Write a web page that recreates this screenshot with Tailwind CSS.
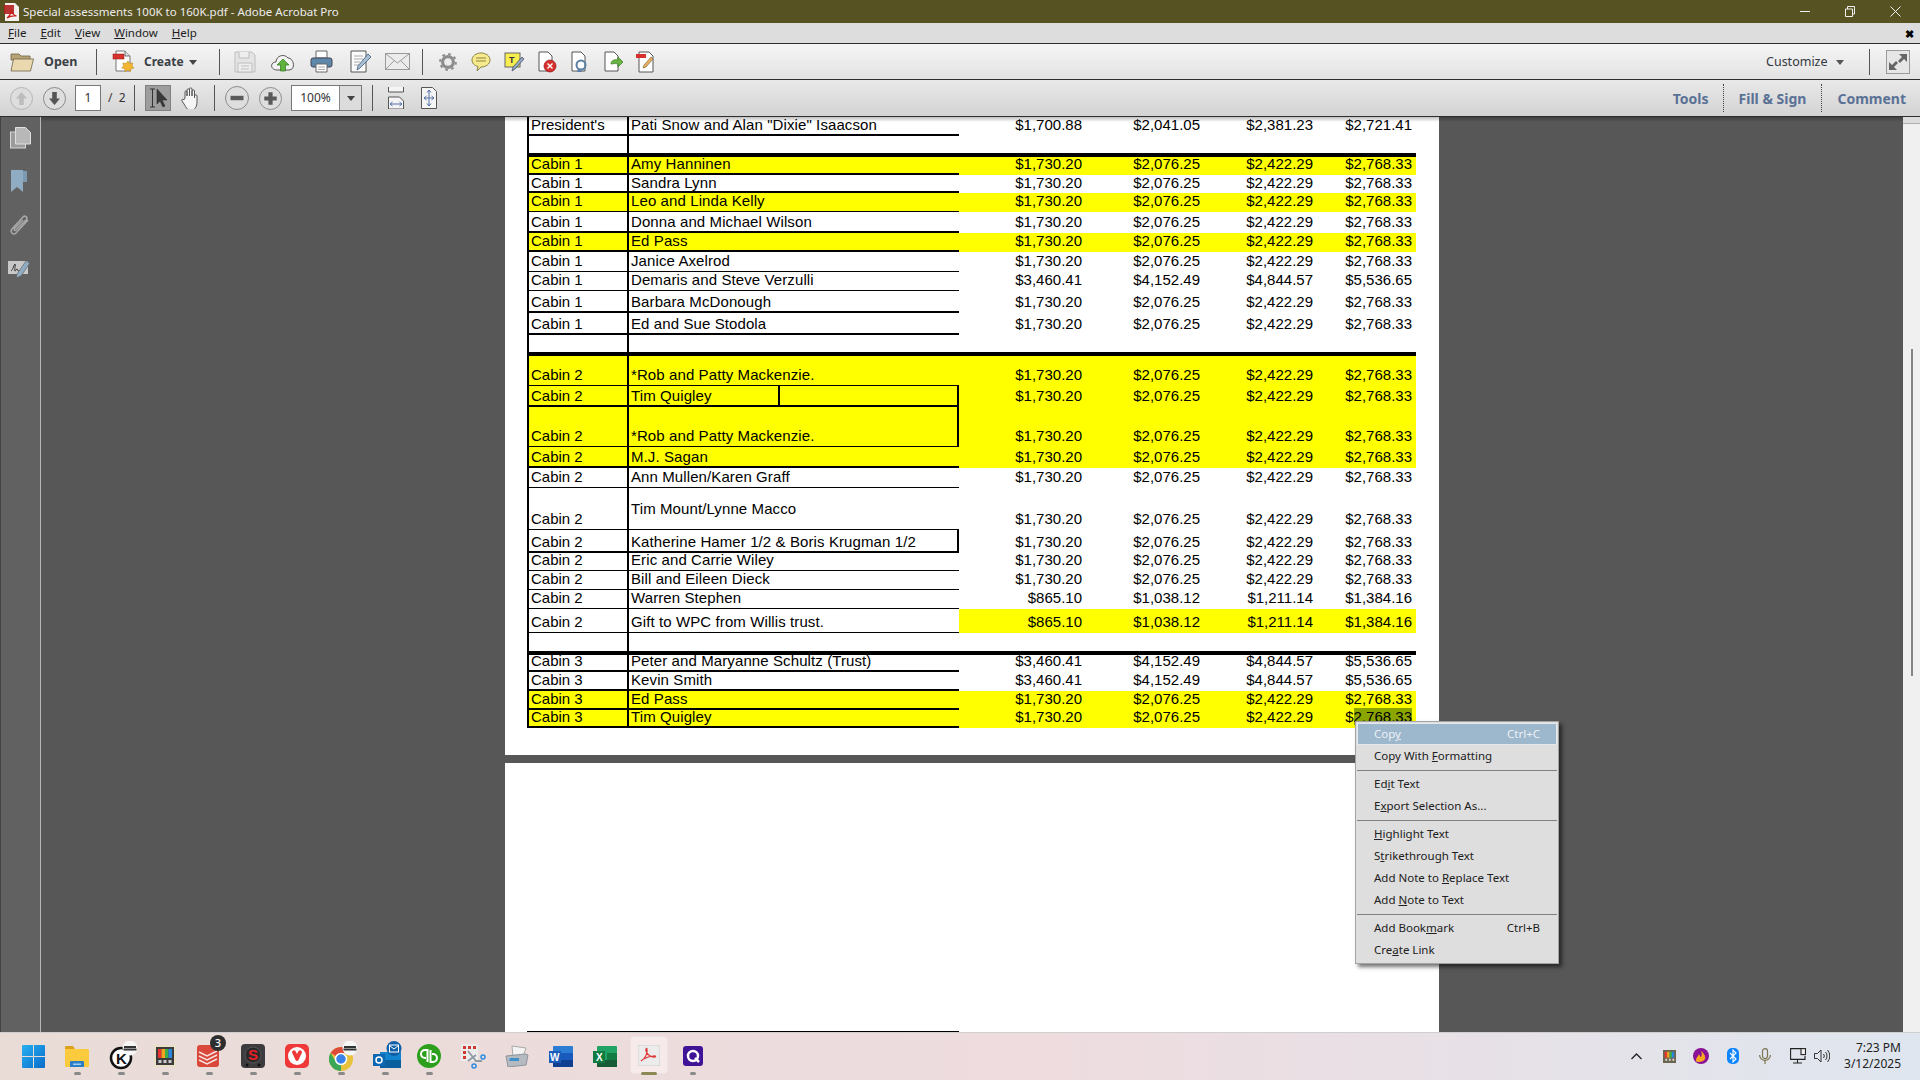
<!DOCTYPE html>
<html lang="en">
<head>
<meta charset="utf-8">
<title>Special assessments 100K to 160K.pdf - Adobe Acrobat Pro</title>
<script src="https://cdn.jsdelivr.net/npm/@tailwindcss/browser@4"></script>
</head>
<body class="w-[1920px] h-[1080px] overflow-hidden flex flex-col font-['Noto_Sans',sans-serif] bg-[#575757] relative">

<!-- Title bar -->
<header class="h-[23px] shrink-0 bg-[#575222] flex items-center text-[#ececec] text-[11.500px] relative z-20">
  <svg class="ml-[4px] w-[15px] h-[18px]" viewBox="0 0 15 18"><path d="M1 0h10l4 4v14H1z" fill="#f4f0ee"/><path d="M0 2h10v9H0z" fill="#b3201c" opacity=".9"/><path d="M3 15c3-2 4-6 3.500-9 .5 3 3 6 6 7-3-.5-6 0-9.500 2z" fill="none" stroke="#c8201c" stroke-width="1.200"/></svg>
  <span class="ml-[4px]">Special assessments 100K to 160K.pdf - Adobe Acrobat Pro</span>
  <div class="ml-auto flex items-center mr-[19px] gap-[34px]">
    <svg class="w-[11px] h-[11px]" viewBox="0 0 11 11"><path d="M0 5.500h10" stroke="#f0f0f0"/></svg>
    <svg class="w-[11px] h-[11px] -ml-[1px] mr-[1px]" viewBox="0 0 11 11" fill="none" stroke="#f0f0f0"><path d="M1.500 3h7v7.500h-7zM3.500 3V.5h7v7.500h-2"/></svg>
    <svg class="w-[11px] h-[11px]" viewBox="0 0 11 11" fill="none" stroke="#f0f0f0"><path d="M.5.5l10 10M10.500.5l-10 10"/></svg>
  </div>
</header>

<!-- Menu bar -->
<nav class="h-[20px] shrink-0 bg-[#dddddd] flex items-center text-[11.500px] text-[#1c1c1c] pl-[8px] gap-[14px] relative z-20">
  <span><span class="underline">F</span>ile</span>
  <span><span class="underline">E</span>dit</span>
  <span><span class="underline">V</span>iew</span>
  <span><span class="underline">W</span>indow</span>
  <span><span class="underline">H</span>elp</span>
  <span class="ml-auto mr-[6px] text-[11px] font-bold leading-none text-black">✖</span>
</nav>

<!-- Main toolbar -->
<div class="h-[37px] shrink-0 flex items-center border-y border-y-[#2e2e2e] bg-linear-to-b from-[#f5f5f5] to-[#e3e3e3] pl-[10px] pr-[10px] relative z-20">
  <svg class="w-[24px] h-[20px]" viewBox="0 0 24 20"><path d="M1 2h8l2 2h9v4H1z" fill="#b9a477" stroke="#6f6247" stroke-width=".8"/><path d="M1 19 3.500 7H23.500l-3 12z" fill="#ead9ae" stroke="#6f6247" stroke-width=".8"/></svg>
  <span class="ml-[10px] mt-[1px] w-[33px] text-[12.500px] font-bold text-[#3a3f46]">Open</span>
  <div class="ml-[19px] w-px h-[26px] bg-[#555]"></div>
  <svg class="ml-[15px] w-[24px] h-[23px]" viewBox="0 0 24 23"><path d="M4 1h9l5 5v15H4z" fill="#fdfdfd" stroke="#555" stroke-width=".8"/><path d="M13 1v5h5" fill="#ddd" stroke="#555" stroke-width=".8"/><rect x="1" y="4" width="11" height="5" fill="#d9332e" stroke="#8a1512" stroke-width=".5"/><path d="M16 11l1.800 2.500 3-.6-.8 3 2 2-3 .8-.7 3-2.500-1.800-2.500 1.800-.7-3-3-.8 2-2-.8-3 3 .6z" fill="#f2b632" stroke="#b57f16" stroke-width=".5"/></svg>
  <span class="ml-[8px] mt-[1px] w-[39px] text-[12px] font-bold text-[#3a3f46]">Create</span>
  <svg class="ml-[6px] w-[8px] h-[5px] mt-[1px]" viewBox="0 0 8 5"><path d="M0 0h8L4 5z" fill="#444"/></svg>
  <div class="ml-[22px] w-px h-[26px] bg-[#555]"></div>
  <svg class="ml-[14px] w-[22px] h-[22px]" viewBox="0 0 22 22" fill="none" stroke="#bdbdbd"><path d="M1 1h17l3 3v17H1z" fill="#e4e4e4"/><path d="M5 1v6h10V1M4 12h14v9H4z" fill="#eee"/><path d="M7 15h8M7 18h8"/></svg>
  <svg class="ml-[15px] w-[24px] h-[20px]" viewBox="0 0 24 20"><path d="M6 18c-7 0-7-8-1-8 0-6 8-9 12-4 6 0 8 12 1 12z" fill="#f3f3f3" stroke="#555"/><path d="M12 7l6 6h-3.500v6h-5v-6H6z" fill="#5fb23c" stroke="#2f7a1a" stroke-width=".7"/></svg>
  <svg class="ml-[15px] w-[23px] h-[23px]" viewBox="0 0 23 23"><path d="M6 1h11v7H6z" fill="#fff" stroke="#666"/><rect x="1" y="8" width="21" height="9" rx="2" fill="#5d87ab" stroke="#445"/><path d="M6 14h11v8H6z" fill="#fff" stroke="#666"/><path d="M8 17h7M8 19.500h7" stroke="#aaa"/></svg>
  <svg class="ml-[17px] w-[22px] h-[23px]" viewBox="0 0 22 23"><path d="M1 1h15v21H1z" fill="#fbfbfb" stroke="#555"/><path d="M4 6h9M4 9h9M4 12h6M4 15h5" stroke="#aaa"/><path d="M7 20l1-4L18 4l3 3L10 18z" fill="#a9bfd4" stroke="#3d5a78" stroke-width=".8"/></svg>
  <svg class="ml-[13px] w-[25px] h-[17px]" viewBox="0 0 25 17" fill="#ececec" stroke="#999"><rect x=".5" y=".5" width="24" height="16"/><path d="M.5.5 12.500 10 24.500.5M.5 16.500 9 7.800M24.500 16.500 16 7.800" fill="none"/></svg>
  <div class="ml-[12px] w-px h-[26px] bg-[#555]"></div>
  <svg class="ml-[16px] w-[18px] h-[20px]" viewBox="0 0 20 20"><circle cx="10" cy="10" r="6" fill="none" stroke="#8d8d8d" stroke-width="3.500"/><circle cx="10" cy="10" r="8.800" fill="none" stroke="#8d8d8d" stroke-width="2.200" stroke-dasharray="3 3.910"/></svg>
  <svg class="ml-[14px] w-[20px] h-[20px]" viewBox="0 0 20 20"><path d="M10 1c5 0 9 3 9 7s-4 7-9 7l-4 4 1-4.500C3 13.500 1 11 1 8c0-4 4-7 9-7z" fill="#f7ea8c" stroke="#8b8248"/><path d="M5 6h10M5 9h10" stroke="#8b8248"/></svg>
  <svg class="ml-[13px] w-[20px] h-[20px]" viewBox="0 0 20 20"><rect x="1" y="1" width="15" height="14" fill="#f8ee50" stroke="#666"/><text x="5" y="11" font-size="9" font-weight="700" font-family="Liberation Sans" fill="#333">T</text><path d="M8 19l1-4 9-10 2 2-9 10z" fill="#8fa9c4" stroke="#445" stroke-width=".7"/></svg>
  <svg class="ml-[14px] w-[19px] h-[22px]" viewBox="0 0 19 22"><path d="M1 1h9l4 4v15H1z" fill="#fff" stroke="#555"/><circle cx="12" cy="15" r="6" fill="#d8302c" stroke="#8f1512" stroke-width=".7"/><path d="M9.500 12.500l5 5m0-5l-5 5" stroke="#fff" stroke-width="1.400"/></svg>
  <svg class="ml-[14px] w-[17px] h-[22px]" viewBox="0 0 17 22"><path d="M1 1h9l4 4v15H1z" fill="#fff" stroke="#555"/><circle cx="10" cy="14" r="4.500" fill="none" stroke="#5b7fa3" stroke-width="2"/><path d="M7 18l-1 3h6z" fill="#5b7fa3"/></svg>
  <svg class="ml-[16px] w-[20px] h-[22px]" viewBox="0 0 20 22"><path d="M1 1h9l4 4v15H1z" fill="#fff" stroke="#555"/><path d="M7 13c0-4 4-5 7-4V6l5 5-5 5v-3c-3-1-5 0-7 0z" fill="#6ab345" stroke="#3a7c1f" stroke-width=".7"/></svg>
  <svg class="ml-[12px] w-[20px] h-[22px]" viewBox="0 0 20 22"><path d="M3 1h10l4 4v16H3z" fill="#fff" stroke="#555"/><rect x="0" y="3" width="10" height="4" fill="#d8302c"/><path d="M7 17l1-3 7-8 2 2-7 8z" fill="#e5b065" stroke="#7a5a25" stroke-width=".6"/></svg>

  <span class="ml-auto mt-[1px] w-[60px] text-[12.500px] text-[#33383f]">Customize</span>
  <svg class="ml-[10px] mt-[1px] w-[8px] h-[5px]" viewBox="0 0 8 5"><path d="M0 0h8L4 5z" fill="#555"/></svg>
  <div class="ml-[25px] w-px h-[26px] bg-[#555]"></div>
  <svg class="ml-[16px] w-[24px] h-[24px]" viewBox="0 0 24 24"><rect x=".5" y=".5" width="23" height="23" fill="#e6e6e6" stroke="#9a9a9a"/><path d="M13 4h8v8l-3-3-4 4-2-2 4-4zM11 20H3v-8l3 3 4-4 2 2-4 4z" fill="#666"/></svg>
</div>

<!-- Navigation toolbar -->
<div class="h-[37px] shrink-0 flex items-center border-b border-b-[#2e2e2e] bg-linear-to-b from-[#e9e9e9] to-[#d3d3d3] pl-[10px] relative z-20">
  <svg class="w-[23px] h-[23px]" viewBox="0 0 23 23"><circle cx="11.500" cy="11.500" r="11" fill="#dedede" stroke="#b5b5b5"/><path d="M11.500 5l5.500 6.500h-3.200V18H9.200v-6.500H6z" fill="#bdbdbd"/></svg>
  <svg class="ml-[10px] w-[23px] h-[23px]" viewBox="0 0 23 23"><circle cx="11.500" cy="11.500" r="11" fill="#dedede" stroke="#8a8a8a"/><path d="M11.500 18 6 11.500h3.200V5h4.600v6.500H17z" fill="#555"/></svg>
  <div class="ml-[9px] w-[26px] h-[26px] bg-white border border-[#777] flex items-center justify-center text-[12px] text-[#333]">1</div>
  <span class="ml-[7px] w-[17px] text-[12px] text-[#333] whitespace-nowrap">/&nbsp;&nbsp;2</span>
  <div class="ml-[9px] w-px h-[26px] bg-[#555]"></div>
  <div class="ml-[10px] w-[26px] h-[26px] bg-[#9d9d9d] border border-[#808080] flex items-center justify-center">
    <svg class="w-[21px] h-[20px]" viewBox="0 0 21 20"><path d="M2 1h5M2 19h5M4.500 1v18" stroke="#333" fill="none"/><path d="M9 1l10 11h-5l3 6-2 1-3-6-3 3z" fill="#3a3a3a" stroke="#222" stroke-width=".5"/></svg>
  </div>
  <svg class="ml-[10px] w-[19px] h-[22px]" viewBox="0 0 19 22"><path d="M4 11V5c0-1.500 2-1.500 2 0v4-6c0-1.500 2.500-1.500 2.500 0v6V2c0-1.500 2.500-1.500 2.500 0v7-5c0-1.500 2.500-1.500 2.500 0v7-2c0-1.500 2.500-1.500 2.500 0v6c0 4-2 8-5 8H9c-3 0-4-3-6-6l-2-3c-.8-1.500 1-2.500 2-1.200z" fill="#f5f5f5" stroke="#555"/></svg>
  <div class="ml-[14px] w-px h-[26px] bg-[#555]"></div>
  <svg class="ml-[10px] w-[24px] h-[24px]" viewBox="0 0 24 24"><circle cx="12" cy="12" r="11.500" fill="#dedede" stroke="#8a8a8a"/><rect x="5.500" y="9.800" width="13" height="4.400" fill="#5a5a5a"/></svg>
  <svg class="ml-[10px] w-[23px] h-[23px]" viewBox="0 0 24 24"><circle cx="12" cy="12" r="11.500" fill="#dedede" stroke="#8a8a8a"/><path d="M9.800 5.500h4.400v4.300h4.300v4.400h-4.300v4.300H9.800v-4.300H5.500V9.800h4.300z" fill="#5a5a5a"/></svg>
  <div class="ml-[9px] w-[71px] h-[26px] bg-white border border-[#777] flex items-center text-[12px] text-[#333]">
    <span class="w-[47px] text-center">100%</span>
    <span class="flex-1 h-full bg-[#dcdcdc] border-l border-l-[#888] flex items-center justify-center"><svg class="w-[8px] h-[5px]" viewBox="0 0 8 5"><path d="M0 0h8L4 5z" fill="#444"/></svg></span>
  </div>
  <div class="ml-[10px] w-px h-[26px] bg-[#555]"></div>
  <svg class="ml-[15px] w-[16px] h-[22px]" viewBox="0 0 16 22" fill="none"><path d="M.5 0v5h15V0" stroke="#555" fill="#f5f5f5"/><path d="M.5 10h11l4 4v8H.5z" stroke="#555" fill="#f5f5f5"/><path d="M2 17h12M2 17l2.500-2M2 17l2.500 2M14 17l-2.500-2M14 17l-2.500 2" stroke="#5470a8"/></svg>
  <svg class="ml-[17px] w-[16px] h-[22px]" viewBox="0 0 16 22" fill="none"><path d="M.5.500h11l4 4V21.500H.5z" stroke="#555" fill="#f5f5f5"/><path d="M8 3v16M3 11h10M8 3 6 5.500M8 3l2 2.500M8 19l-2-2.500M8 19l2-2.500M3 11l2.500-2M3 11l2.500 2M13 11l-2.500-2M13 11l-2.500 2" stroke="#5470a8"/></svg>

  <div class="ml-auto flex items-center text-[14px] font-bold text-[#5a7196] h-[28px] pr-[14px]">
    <span class="pr-[14px]">Tools</span>
    <span class="px-[15px] h-full flex items-center border-l border-dotted border-l-[#444]">Fill &amp; Sign</span>
    <span class="pl-[15px] h-full flex items-center border-l border-dotted border-l-[#444]">Comment</span>
  </div>
</div>

<!-- Work area -->
<main class="h-[915px] shrink-0 flex">
  <!-- Left nav pane -->
  <aside class="w-[41px] shrink-0 bg-[#616161] border-l border-l-[#444] border-r border-r-[#b8b8b8] flex flex-col items-center pt-[10px] gap-[21px]">
    <svg class="w-[21px] h-[22px] -ml-[1px]" viewBox="0 0 21 22"><rect x=".5" y="5" width="15" height="16" fill="#9b9b9b" stroke="#d8d8d8"/><path d="M5.500.5h10l5 5V17h-15z" fill="#b8b8b8" stroke="#e0e0e0"/></svg>
    <svg class="w-[18px] h-[23px] -ml-[3px]" viewBox="0 0 18 23"><path d="M1 0h12v22l-6-5-6 5z" fill="#8facc2"/><path d="M13 1h4v11h-4z" fill="#7d99b0"/></svg>
    <svg class="w-[22px] h-[24px] -mt-[1px] -ml-[3px]" viewBox="0 0 22 24" fill="none" stroke="#a9a9a9" stroke-width="1.500"><path d="M20 7 8 20c-2.500 2.500-6.500-.5-4-4L15 4c2-2 5 0 3.500 2.500L8 17c-1 1-2.500 0-1.500-1.500L15 7"/></svg>
    <svg class="w-[24px] h-[19px] mt-[2px] -ml-[3px]" viewBox="0 0 24 19"><path d="M1 1h20v13H1z" fill="#c8c8c8"/><path d="M4 11c2-1 3-7 4-7s-1 7 0 7 1-2 2-2 0 2 2 2" fill="none" stroke="#333"/><path d="M9 18l1-4 9-13 4 2-9 13z" fill="#8facc2" stroke="#555" stroke-width=".6"/></svg>
  </aside>

  <!-- Document pane -->
  <section class="flex-1 pl-[464px] overflow-hidden relative flex flex-col">
    <!-- Page 1 -->
    <article class="w-[934px] h-[638px] shrink-0 bg-white pl-[22px] pr-[23px] font-['Liberation_Sans',Arial,sans-serif] text-[15px] leading-[12px] text-black [&>div>:nth-child(1)]:border-x-2 [&>div>:nth-child(-n+2)]:pl-[2px] [&>div>:nth-child(2)]:tracking-[.1px] [&>div>:nth-child(n+3)]:text-right [&>div>:nth-child(-n+2)]:whitespace-nowrap [&>div>:nth-child(6)]:pr-[4px]">
      <div class="grid grid-cols-[102px_330px_123px_118px_113px_103px] h-[19px] [&>*]:pt-[2px] [&>:nth-child(-n+2)]:border-b-2"><div>President's</div><div>Pati Snow and Alan "Dixie" Isaacson</div><div>$1,700.88</div><div>$2,041.05</div><div>$2,381.23</div><div>$2,721.41</div></div>
      <div class="grid grid-cols-[102px_330px_123px_118px_113px_103px] h-[21px] border-b-4"><div></div><div></div><div></div><div></div><div></div><div></div></div>
      <div class="grid grid-cols-[102px_330px_123px_118px_113px_103px] h-[18px] bg-[#ffff00] [&>*]:pt-[1px] [&>:nth-child(-n+2)]:border-b-2"><div>Cabin 1</div><div>Amy Hanninen</div><div>$1,730.20</div><div>$2,076.25</div><div>$2,422.29</div><div>$2,768.33</div></div>
      <div class="grid grid-cols-[102px_330px_123px_118px_113px_103px] h-[18px] [&>*]:pt-[2px] [&>:nth-child(-n+2)]:border-b-2"><div>Cabin 1</div><div>Sandra Lynn</div><div>$1,730.20</div><div>$2,076.25</div><div>$2,422.29</div><div>$2,768.33</div></div>
      <div class="grid grid-cols-[102px_330px_123px_118px_113px_103px] h-[19px] bg-[#ffff00] [&>*]:pt-[2px] [&>:nth-child(-n+2)]:border-b"><div>Cabin 1</div><div>Leo and Linda Kelly</div><div>$1,730.20</div><div>$2,076.25</div><div>$2,422.29</div><div>$2,768.33</div></div>
      <div class="grid grid-cols-[102px_330px_123px_118px_113px_103px] h-[21px] [&>*]:pt-[4px] [&>:nth-child(-n+2)]:border-b-2"><div>Cabin 1</div><div>Donna and Michael Wilson</div><div>$1,730.20</div><div>$2,076.25</div><div>$2,422.29</div><div>$2,768.33</div></div>
      <div class="grid grid-cols-[102px_330px_123px_118px_113px_103px] h-[19px] bg-[#ffff00] [&>*]:pt-[2px] [&>:nth-child(-n+2)]:border-b-2"><div>Cabin 1</div><div>Ed Pass</div><div>$1,730.20</div><div>$2,076.25</div><div>$2,422.29</div><div>$2,768.33</div></div>
      <div class="grid grid-cols-[102px_330px_123px_118px_113px_103px] h-[20px] [&>*]:pt-[3px] [&>:nth-child(-n+2)]:border-b"><div>Cabin 1</div><div>Janice Axelrod</div><div>$1,730.20</div><div>$2,076.25</div><div>$2,422.29</div><div>$2,768.33</div></div>
      <div class="grid grid-cols-[102px_330px_123px_118px_113px_103px] h-[19px] [&>*]:pt-[2px] [&>:nth-child(-n+2)]:border-b"><div>Cabin 1</div><div>Demaris and Steve Verzulli</div><div>$3,460.41</div><div>$4,152.49</div><div>$4,844.57</div><div>$5,536.65</div></div>
      <div class="grid grid-cols-[102px_330px_123px_118px_113px_103px] h-[22px] [&>*]:pt-[5px] [&>:nth-child(-n+2)]:border-b-2"><div>Cabin 1</div><div>Barbara McDonough</div><div>$1,730.20</div><div>$2,076.25</div><div>$2,422.29</div><div>$2,768.33</div></div>
      <div class="grid grid-cols-[102px_330px_123px_118px_113px_103px] h-[22px] [&>*]:pt-[5px] [&>:nth-child(-n+2)]:border-b-2"><div>Cabin 1</div><div>Ed and Sue Stodola</div><div>$1,730.20</div><div>$2,076.25</div><div>$2,422.29</div><div>$2,768.33</div></div>
      <div class="grid grid-cols-[102px_330px_123px_118px_113px_103px] h-[21px] border-b-4"><div></div><div></div><div></div><div></div><div></div><div></div></div>
      <div class="grid grid-cols-[102px_330px_123px_118px_113px_103px] h-[30px] bg-[#ffff00] [&>*]:pt-[13px] [&>:nth-child(-n+2)]:border-b"><div>Cabin 2</div><div>*Rob and Patty Mackenzie.</div><div>$1,730.20</div><div>$2,076.25</div><div>$2,422.29</div><div>$2,768.33</div></div>
      <div class="grid grid-cols-[102px_330px_123px_118px_113px_103px] h-[21px] bg-[#ffff00] [&>*]:pt-[4px] [&>:nth-child(-n+2)]:border-b-2"><div>Cabin 2</div><div class="relative border-r-2">Tim Quigley<span class="absolute left-[149px] -top-px -bottom-[2px] w-[2px] bg-black"></span></div><div>$1,730.20</div><div>$2,076.25</div><div>$2,422.29</div><div>$2,768.33</div></div>
      <div class="grid grid-cols-[102px_330px_123px_118px_113px_103px] h-[40px] bg-[#ffff00] [&>*]:pt-[23px] [&>:nth-child(-n+2)]:border-b"><div>Cabin 2</div><div class="border-r-2">*Rob and Patty Mackenzie.</div><div>$1,730.20</div><div>$2,076.25</div><div>$2,422.29</div><div>$2,768.33</div></div>
      <div class="grid grid-cols-[102px_330px_123px_118px_113px_103px] h-[21px] bg-[#ffff00] [&>*]:pt-[4px] [&>:nth-child(-n+2)]:border-b-2"><div>Cabin 2</div><div>M.J. Sagan</div><div>$1,730.20</div><div>$2,076.25</div><div>$2,422.29</div><div>$2,768.33</div></div>
      <div class="grid grid-cols-[102px_330px_123px_118px_113px_103px] h-[20px] [&>*]:pt-[3px] [&>:nth-child(-n+2)]:border-b"><div>Cabin 2</div><div>Ann Mullen/Karen Graff</div><div>$1,730.20</div><div>$2,076.25</div><div>$2,422.29</div><div>$2,768.33</div></div>
      <div class="grid grid-cols-[102px_330px_123px_118px_113px_103px] h-[42px] [&>*]:pt-[25px] [&>:nth-child(-n+2)]:border-b"><div>Cabin 2</div><div class="!pt-[15px]">Tim Mount/Lynne Macco</div><div>$1,730.20</div><div>$2,076.25</div><div>$2,422.29</div><div>$2,768.33</div></div>
      <div class="grid grid-cols-[102px_330px_123px_118px_113px_103px] h-[23px] [&>*]:pt-[6px] [&>:nth-child(-n+2)]:border-b-2"><div>Cabin 2</div><div class="border-r-2">Katherine Hamer 1/2 &amp; Boris Krugman 1/2</div><div>$1,730.20</div><div>$2,076.25</div><div>$2,422.29</div><div>$2,768.33</div></div>
      <div class="grid grid-cols-[102px_330px_123px_118px_113px_103px] h-[18px] [&>*]:pt-[1px] [&>:nth-child(-n+2)]:border-b"><div>Cabin 2</div><div>Eric and Carrie Wiley</div><div>$1,730.20</div><div>$2,076.25</div><div>$2,422.29</div><div>$2,768.33</div></div>
      <div class="grid grid-cols-[102px_330px_123px_118px_113px_103px] h-[19px] [&>*]:pt-[2px] [&>:nth-child(-n+2)]:border-b"><div>Cabin 2</div><div>Bill and Eileen Dieck</div><div>$1,730.20</div><div>$2,076.25</div><div>$2,422.29</div><div>$2,768.33</div></div>
      <div class="grid grid-cols-[102px_330px_123px_118px_113px_103px] h-[19px] [&>*]:pt-[2px] [&>:nth-child(-n+2)]:border-b"><div>Cabin 2</div><div>Warren Stephen</div><div>$865.10</div><div>$1,038.12</div><div>$1,211.14</div><div>$1,384.16</div></div>
      <div class="grid grid-cols-[102px_330px_123px_118px_113px_103px] h-[24px] [&>*]:pt-[7px] [&>:nth-child(-n+2)]:border-b [&>:nth-child(n+3)]:bg-[#ffff00]"><div>Cabin 2</div><div>Gift to WPC from Willis trust.</div><div>$865.10</div><div>$1,038.12</div><div>$1,211.14</div><div>$1,384.16</div></div>
      <div class="grid grid-cols-[102px_330px_123px_118px_113px_103px] h-[22px] border-b-4"><div></div><div></div><div></div><div></div><div></div><div></div></div>
      <div class="grid grid-cols-[102px_330px_123px_118px_113px_103px] h-[17px] [&>:nth-child(-n+2)]:border-b-2"><div>Cabin 3</div><div>Peter and Maryanne Schultz (Trust)</div><div>$3,460.41</div><div>$4,152.49</div><div>$4,844.57</div><div>$5,536.65</div></div>
      <div class="grid grid-cols-[102px_330px_123px_118px_113px_103px] h-[19px] [&>*]:pt-[2px] [&>:nth-child(-n+2)]:border-b-2"><div>Cabin 3</div><div>Kevin Smith</div><div>$3,460.41</div><div>$4,152.49</div><div>$4,844.57</div><div>$5,536.65</div></div>
      <div class="grid grid-cols-[102px_330px_123px_118px_113px_103px] h-[19px] bg-[#ffff00] [&>*]:pt-[2px] [&>:nth-child(-n+2)]:border-b-2"><div>Cabin 3</div><div>Ed Pass</div><div>$1,730.20</div><div>$2,076.25</div><div>$2,422.29</div><div>$2,768.33</div></div>
      <div class="grid grid-cols-[102px_330px_123px_118px_113px_103px] h-[18px] bg-[#ffff00] [&>*]:pt-[1px] [&>:nth-child(-n+2)]:border-b-2"><div>Cabin 3</div><div>Tim Quigley</div><div>$1,730.20</div><div>$2,076.25</div><div>$2,422.29</div><div>$<span class="bg-[#8ca600]">2,768.33</span></div></div>
    </article>
    <!-- Page 2 -->
    <article class="w-[934px] h-[269px] shrink-0 mt-[8px] bg-white flex flex-col justify-end pl-[22px]">
      <div class="w-[432px] h-px bg-black"></div>
    </article>
    <!-- Shadow under toolbars -->
    <div class="absolute left-0 right-0 top-0 h-[5px] bg-linear-to-b from-black/25 to-transparent"></div>
  </section>

  <!-- Scrollbar -->
  <aside class="w-[17px] shrink-0 bg-[#f0f0f0] flex flex-col items-center">
    <div class="w-full h-[7px] bg-[#dcdcdc] border-b border-b-[#b0b0b0]"></div>
    <div class="w-[2px] h-[327px] mt-[225px] bg-[#858585]"></div>
  </aside>
</main>

<!-- Taskbar -->
<footer class="h-[48px] shrink-0 flex items-center pl-[11px] pb-px border-t border-t-[#cfcfcf] bg-linear-to-r from-[#e9dcd7] via-[#eedcdf] via-55% to-[#dfe6ef] relative">
  <div class="w-[44px] h-[44px] flex items-center justify-center relative">
    <svg class="w-[23px] h-[23px]" viewBox="0 0 23 23"><defs><linearGradient id="w" x1="0" y1="0" x2="1" y2="1"><stop offset="0" stop-color="#27b0f0"/><stop offset="1" stop-color="#0a6ccb"/></linearGradient></defs><path d="M1 0h10v11H0V1a1 1 0 0 1 1-1zM12 0h10a1 1 0 0 1 1 1v10H12zM0 12h11v11H1a1 1 0 0 1-1-1zM12 12h11v10a1 1 0 0 1-1 1H12z" fill="url(#w)"/></svg>
  </div>
  <div class="w-[44px] h-[44px] flex items-center justify-center relative">
    <svg class="w-[24px] h-[22px]" viewBox="0 0 24 22"><path d="M0 2a1 1 0 0 1 1-1h7l2 3H0z" fill="#dca01d"/><path d="M0 4h23a1 1 0 0 1 1 1v16a1 1 0 0 1-1 1H1a1 1 0 0 1-1-1z" fill="#fbcb3d"/><path d="M5 17a1 1 0 0 1 1-1h12a1 1 0 0 1 1 1v5H5z" fill="#2b7dc6"/><rect x="8" y="18.500" width="8" height="1.500" fill="#9fd0f3"/></svg>
    <span class="absolute bottom-[3px] left-[19px] w-[7px] h-[3px] rounded-full bg-[#8a8a8a]"></span>
  </div>
  <div class="w-[44px] h-[44px] flex items-center justify-center relative">
    <svg class="w-[30px] h-[30px] ml-[6px]" viewBox="0 0 30 30"><circle cx="12" cy="17" r="10" fill="#fff" stroke="#111" stroke-width="2.500"/><text x="7" y="23" font-size="15" font-weight="700" font-family="Liberation Sans" fill="#111">K</text><circle cx="21" cy="7" r="7.500" fill="#f6f6f6"/><path d="M15 6h12M14.500 8.500h13" stroke="#333" stroke-width="1.800"/></svg>
    <span class="absolute bottom-[3px] left-[19px] w-[7px] h-[3px] rounded-full bg-[#8a8a8a]"></span>
  </div>
  <div class="w-[44px] h-[44px] flex items-center justify-center relative">
    <svg class="w-[22px] h-[22px]" viewBox="0 0 22 22"><rect width="22" height="22" fill="#e9e0c7"/><rect x="2" y="2" width="18" height="18" fill="#3b3b3b"/><rect x="4" y="4" width="3.500" height="9" fill="#e33"/><rect x="7.500" y="4" width="3.500" height="9" fill="#f2a51e"/><rect x="11" y="4" width="3.500" height="9" fill="#3dad49"/><rect x="14.500" y="4" width="3.500" height="9" fill="#2b86e0"/><rect x="4.500" y="15" width="3" height="3" fill="#ccc"/><rect x="9.500" y="15" width="3" height="3" fill="#ccc"/><rect x="14.500" y="15" width="3" height="3" fill="#ccc"/></svg>
    <span class="absolute bottom-[3px] left-[19px] w-[7px] h-[3px] rounded-full bg-[#8a8a8a]"></span>
  </div>
  <div class="w-[44px] h-[44px] flex items-center justify-center relative">
    <svg class="w-[24px] h-[22px]" viewBox="0 0 24 22"><rect width="22" height="22" rx="3" fill="#d9483b"/><path d="M2 7l8 4 10-5M2 11l8 4 10-5M2 15l8 4 10-5" fill="none" stroke="#f7e2dd" stroke-width="1.500"/></svg>
    <span class="absolute top-[1px] left-[23px] w-[16px] h-[16px] rounded-full bg-[#2e2e2e] text-white text-[11px] leading-[16px] text-center font-medium">3</span>
    <span class="absolute bottom-[3px] left-[19px] w-[7px] h-[3px] rounded-full bg-[#8a8a8a]"></span>
  </div>
  <div class="w-[44px] h-[44px] flex items-center justify-center relative">
    <svg class="w-[24px] h-[24px]" viewBox="0 0 24 24"><rect width="24" height="24" rx="4" fill="#3c3c3e"/><circle cx="12" cy="11" r="8" fill="#2a2a2b" stroke="#555"/><text x="7" y="16" font-size="15" font-weight="700" font-family="Liberation Sans" fill="#e81e25">S</text><circle cx="6" cy="21" r="1.500" fill="#111"/><circle cx="18" cy="21" r="1.500" fill="#111"/></svg>
    <span class="absolute bottom-[3px] left-[19px] w-[7px] h-[3px] rounded-full bg-[#8a8a8a]"></span>
  </div>
  <div class="w-[44px] h-[44px] flex items-center justify-center relative">
    <svg class="w-[24px] h-[24px]" viewBox="0 0 24 24"><rect width="24" height="24" rx="5" fill="#ef3939"/><circle cx="12" cy="12" r="9" fill="#fff"/><path d="M7 8.500a2 2 0 0 1 3.500-1.500L12 10l1.500-3a2 2 0 0 1 3.500 1.500L13.500 16a1.700 1.700 0 0 1-3 0z" fill="#ef3939"/></svg>
    <span class="absolute bottom-[3px] left-[19px] w-[7px] h-[3px] rounded-full bg-[#8a8a8a]"></span>
  </div>
  <div class="w-[44px] h-[44px] flex items-center justify-center relative">
    <svg class="w-[30px] h-[30px] ml-[6px]" viewBox="0 0 30 30"><circle cx="12" cy="18" r="12" fill="#e9c23a"/><path d="M12 18 1.600 12A12 12 0 0 1 22.400 12H12z" fill="#dd4b39"/><path d="M12 30A12 12 0 0 1 1.600 12L7 21c2 3 5 3 5 3z" fill="#3aa757"/><circle cx="12" cy="18" r="5.500" fill="#3b82e8" stroke="#fff" stroke-width="1.500"/><circle cx="21" cy="7" r="7.500" fill="#f6f6f6"/><path d="M15 6h12M14.500 8.500h13" stroke="#333" stroke-width="1.800"/></svg>
    <span class="absolute bottom-[3px] left-[19px] w-[7px] h-[3px] rounded-full bg-[#8a8a8a]"></span>
  </div>
  <div class="w-[44px] h-[44px] flex items-center justify-center relative">
    <svg class="w-[30px] h-[30px] ml-[6px]" viewBox="0 0 30 30"><path d="M7 11h21v16H7z" fill="#1184cd"/><path d="M7 19h21v8H7z" fill="#0a5f9e"/><rect x="0" y="13" width="12" height="12" fill="#0c67b3"/><circle cx="6" cy="19" r="3" fill="none" stroke="#fff" stroke-width="1.500"/><circle cx="21" cy="7.500" r="7.500" fill="#0f5fa8"/><rect x="16.500" y="4" width="9" height="7" fill="none" stroke="#fff"/><path d="M16.500 4.500 21 8l4.500-3.500" fill="none" stroke="#fff"/></svg>
    <span class="absolute bottom-[3px] left-[19px] w-[7px] h-[3px] rounded-full bg-[#8a8a8a]"></span>
  </div>
  <div class="w-[44px] h-[44px] flex items-center justify-center relative">
    <svg class="w-[24px] h-[24px]" viewBox="0 0 24 24"><circle cx="12" cy="12" r="12" fill="#2ca01c"/><path d="M10.500 18V6H8a4 4 0 0 0 0 8h1M13.500 6v12H16a4 4 0 0 0 0-8h-1" fill="none" stroke="#fff" stroke-width="2"/></svg>
    <span class="absolute bottom-[3px] left-[19px] w-[7px] h-[3px] rounded-full bg-[#8a8a8a]"></span>
  </div>
  <div class="w-[44px] h-[44px] flex items-center justify-center relative">
    <svg class="w-[26px] h-[26px]" viewBox="0 0 26 26"><rect x="1" y="1" width="17" height="17" fill="#ececec"/><path d="M3 3h3v3H3zM8 3h3v3H8zM13 3h3v3h-3zM3 8h3v3H3zM3 13h3v3H3z" fill="#d03a30"/><path d="M8 8l8 10h6M8 18l8-6" stroke="#8f9aa6" stroke-width="1.800" fill="none"/><circle cx="23" cy="14" r="2" fill="none" stroke="#2b8be0" stroke-width="1.500"/><circle cx="14" cy="23" r="2" fill="none" stroke="#2b8be0" stroke-width="1.500"/></svg>
  </div>
  <div class="w-[44px] h-[44px] flex items-center justify-center relative">
    <svg class="w-[24px] h-[22px]" viewBox="0 0 24 22"><path d="M7 1l14 2-3 9H8z" fill="#f3f3f3" stroke="#aaa"/><path d="M1 11l19-2 3 1-2 10-18 2z" fill="#b4bac0" stroke="#8d949b"/><path d="M5 13h9v3H4z" fill="#3f8fc9"/></svg>
  </div>
  <div class="w-[44px] h-[44px] flex items-center justify-center relative">
    <svg class="w-[24px] h-[21px]" viewBox="0 0 24 21"><rect x="4" width="20" height="21" rx="1" fill="#2b7cd3"/><rect x="4" y="7" width="20" height="7" fill="#185abd"/><rect x="4" y="14" width="20" height="7" fill="#103f91"/><rect x="0" y="5" width="12" height="12" fill="#1a5cb8"/><text x="1" y="15" font-size="10" font-weight="700" font-family="Liberation Sans" fill="#fff">W</text></svg>
  </div>
  <div class="w-[44px] h-[44px] flex items-center justify-center relative">
    <svg class="w-[24px] h-[21px]" viewBox="0 0 24 21"><rect x="4" width="20" height="21" rx="1" fill="#21a366"/><rect x="14" y="7" width="10" height="7" fill="#107c41"/><rect x="4" y="14" width="20" height="7" fill="#185c37"/><rect x="0" y="5" width="12" height="12" fill="#107c41"/><text x="3" y="15" font-size="10" font-weight="700" font-family="Liberation Sans" fill="#fff">X</text></svg>
  </div>
  <div class="w-[44px] h-[44px] flex items-center justify-center relative">
    <div class="absolute left-[3px] top-[2px] w-[38px] h-[38px] rounded-[4px] bg-[#f6eaeb] border border-[#efe2e3]"></div>
    <svg class="w-[22px] h-[21px] relative -mt-[2px]" viewBox="0 0 22 21"><rect width="22" height="21" rx="1" fill="#ececec" stroke="#ccc"/><path d="M3 16c4-2 7-8 6-12-.5-1.500-1.500 0-1 2 1 3 5 7 9 6 1.500-.5 0-1.500-2-1-3 .5-9 2-12 5z" fill="none" stroke="#e03a3a" stroke-width="1.200"/></svg>
    <span class="absolute bottom-[3px] left-[14px] w-[16px] h-[3px] rounded-full bg-[#8b8a55]"></span>
  </div>
  <div class="w-[44px] h-[44px] flex items-center justify-center relative">
    <svg class="w-[20px] h-[20px]" viewBox="0 0 20 20"><rect width="20" height="20" rx="3" fill="#3f1497"/><circle cx="10" cy="10" r="5" fill="none" stroke="#fff" stroke-width="2.500"/><path d="M12 12l4 4" stroke="#fff" stroke-width="2.500"/></svg>
    <span class="absolute bottom-[3px] left-[19px] w-[6px] h-[3px] rounded-full bg-[#8a8a8a]"></span>
  </div>

  <!-- Tray -->
  <div class="ml-auto flex items-center h-full">
    <svg class="w-[11px] h-[7px]" viewBox="0 0 11 7" fill="none" stroke="#222" stroke-width="1.300"><path d="M.5 6 5.500 1l5 5"/></svg>
    <svg class="ml-[21px] w-[13px] h-[13px]" viewBox="0 0 22 22"><rect width="22" height="22" fill="#6b6550"/><rect x="3" y="3" width="4" height="10" fill="#e33"/><rect x="7" y="3" width="4" height="10" fill="#f2a51e"/><rect x="11" y="3" width="4" height="10" fill="#3dad49"/><rect x="15" y="3" width="4" height="10" fill="#2b86e0"/><path d="M4 15h3v3H4zM10 15h3v3h-3zM16 15h3v3h-3z" fill="#ddd"/></svg>
    <svg class="ml-[17px] w-[16px] h-[16px]" viewBox="0 0 16 16"><circle cx="8" cy="8" r="8" fill="#8a1296"/><path d="M3 13c0-4 2-4 3-7 1 2 1 3 2 3 1-2 1-4 0-6 3 2 5 6 4 8-1 3-8 4-9 2z" fill="#f9a81e"/></svg>
    <svg class="ml-[18px] w-[12px] h-[16px]" viewBox="0 0 12 16"><rect width="12" height="16" rx="5" fill="#0a84ff"/><path d="M3 5l6 6-3 3V2l3 3-6 6" fill="none" stroke="#fff" stroke-width="1.100"/></svg>
    <svg class="ml-[20px] w-[12px] h-[16px]" viewBox="0 0 12 16" fill="none" stroke="#7b7551" stroke-width="1.200"><rect x="3.500" y=".6" width="5" height="10" rx="2.500"/><path d="M.6 7a5.400 5.400 0 0 0 10.800 0M6 12.500V16"/></svg>
    <svg class="ml-[19px] w-[17px] h-[16px]" viewBox="0 0 17 16" fill="none" stroke="#222" stroke-width="1.100"><path d="M11 .6H.6v10.800H15V8M3 15h9M7.500 11.500V15"/><rect x="11" y=".6" width="4.500" height="6" fill="#eee"/></svg>
    <svg class="ml-[7px] w-[16px] h-[14px]" viewBox="0 0 16 14" fill="none" stroke="#333" stroke-width="1"><path d="M.5 4.500h3L7 1v12L3.500 9.500h-3zM9.500 5a3 3 0 0 1 0 4M11.500 3a6 6 0 0 1 0 8M13.500 1a9 9 0 0 1 0 12"/></svg>
    <div class="ml-[14px] mr-[19px] text-[12px] leading-[16px] text-right text-[#222]">
      <div>7:23 PM</div>
      <div>3/12/2025</div>
    </div>
  </div>
</footer>

<!-- Context menu -->
<div class="absolute left-[1355px] top-[721px] w-[204px] h-[243px] bg-[#dedede] border border-[#a3a3a3] p-[1px] shadow-[3px_3px_4px_rgba(0,0,0,0.55)] text-[11.500px] text-[#202020] z-30">
  <div class="h-[22px] flex items-center justify-between pl-[16px] pr-[16px] bg-[#9db7cd] border border-[#e4e9ee] text-[#eef2f5]"><span>Cop<span class="underline">y</span></span><span>Ctrl+C</span></div>
  <div class="h-[22px] flex items-center pl-[17px]"><span>Copy With <span class="underline">F</span>ormatting</span></div>
  <div class="h-[6px] flex items-center"><div class="w-full h-px bg-[#808080]"></div></div>
  <div class="h-[22px] flex items-center pl-[17px]"><span>Ed<span class="underline">i</span>t Text</span></div>
  <div class="h-[22px] flex items-center pl-[17px]"><span>E<span class="underline">x</span>port Selection As...</span></div>
  <div class="h-[6px] flex items-center"><div class="w-full h-px bg-[#808080]"></div></div>
  <div class="h-[22px] flex items-center pl-[17px]"><span><span class="underline">H</span>ighlight Text</span></div>
  <div class="h-[22px] flex items-center pl-[17px]"><span>S<span class="underline">t</span>rikethrough Text</span></div>
  <div class="h-[22px] flex items-center pl-[17px]"><span>Add Note to <span class="underline">R</span>eplace Text</span></div>
  <div class="h-[22px] flex items-center pl-[17px]"><span>Add <span class="underline">N</span>ote to Text</span></div>
  <div class="h-[6px] flex items-center"><div class="w-full h-px bg-[#808080]"></div></div>
  <div class="h-[22px] flex items-center justify-between pl-[17px] pr-[17px]"><span>Add Book<span class="underline">m</span>ark</span><span>Ctrl+B</span></div>
  <div class="h-[22px] flex items-center pl-[17px]"><span>Cre<span class="underline">a</span>te Link</span></div>
</div>

</body>
</html>
